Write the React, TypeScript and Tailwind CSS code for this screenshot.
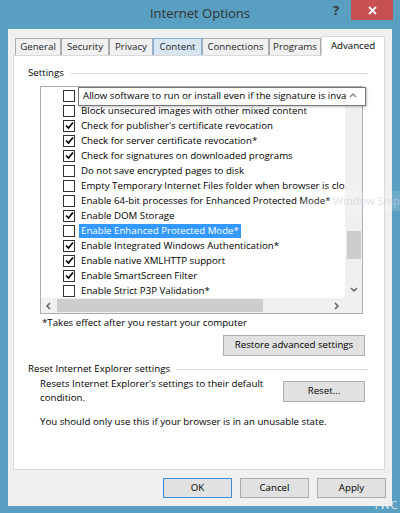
import React from "react";

type Item = { label: string; checked: boolean; selected?: boolean };

const items: Item[] = [
  { label: "Allow software to run or install even if the signature is invalid", checked: false },
  { label: "Block unsecured images with other mixed content", checked: false },
  { label: "Check for publisher's certificate revocation", checked: true },
  { label: "Check for server certificate revocation*", checked: true },
  { label: "Check for signatures on downloaded programs", checked: true },
  { label: "Do not save encrypted pages to disk", checked: false },
  { label: "Empty Temporary Internet Files folder when browser is closed", checked: false },
  { label: "Enable 64-bit processes for Enhanced Protected Mode*", checked: false },
  { label: "Enable DOM Storage", checked: true },
  { label: "Enable Enhanced Protected Mode*", checked: false, selected: true },
  { label: "Enable Integrated Windows Authentication*", checked: true },
  { label: "Enable native XMLHTTP support", checked: true },
  { label: "Enable SmartScreen Filter", checked: true },
  { label: "Enable Strict P3P Validation*", checked: false },
];

const tabs = [
  { name: "General", w: "w-[46px]" },
  { name: "Security", w: "w-[48px]" },
  { name: "Privacy", w: "w-[44px]" },
  { name: "Content", w: "w-[49px]", hover: true },
  { name: "Connections", w: "w-[67px]" },
  { name: "Programs", w: "w-[52px]" },
];

// little chevrons for the scroll bars
const Chevron = ({ dir }: { dir: "up" | "down" | "left" | "right" }) => {
  const d = {
    up: "M1 5 L4 2 L7 5",
    down: "M1 2 L4 5 L7 2",
    left: "M5 1 L2 4 L5 7",
    right: "M2 1 L5 4 L2 7",
  }[dir];
  return (
    <svg width="8" height="8" viewBox="0 0 8 8">
      <path d={d} stroke="#606060" strokeWidth="1.5" fill="none" />
    </svg>
  );
};

const CheckBox = ({ checked }: { checked: boolean }) => (
  <div className="w-[12px] h-[12px] border border-[#333333] bg-white flex items-center justify-center shrink-0">
    {checked && (
      <svg width="9" height="9" viewBox="0 0 9 9">
        <path d="M1 4.5 L3.5 7 L8 1.5" stroke="#000" strokeWidth="1.7" fill="none" />
      </svg>
    )}
  </div>
);

const Button = ({ label, className = "", primary = false }: { label: string; className?: string; primary?: boolean }) => (
  <div
    className={`flex items-center justify-center bg-[#e1e1e1] border ${
      primary ? "border-[#3c8fd6]" : "border-[#adadad]"
    } text-black ${className}`}
  >
    {label}
  </div>
);

export default function App() {
  return (
    <div className="w-[400px] h-[513px] bg-[#589fc1] flex flex-col relative overflow-hidden font-['Open_Sans',sans-serif] text-[9.7px] text-black">
      {/* title bar */}
      <div className="h-[29px] grid grid-cols-[1fr_auto_1fr] shrink-0">
        <div />
        <div className="pt-[4px] text-[13px] text-[#333333] leading-[18px]">Internet Options</div>
        <div className="flex justify-end items-start">
          <div className="mt-[3px] mr-[12px] text-[12px] font-bold text-[#333] leading-[16px]">?</div>
          <div className="w-[42px] h-[20px] mr-[7px] bg-[#c75050] flex items-center justify-center">
            <svg width="9" height="9" viewBox="0 0 9 9">
              <path d="M1 1 L8 8 M8 1 L1 8" stroke="#fff" strokeWidth="1.8" />
            </svg>
          </div>
        </div>
      </div>

      {/* client area */}
      <div className="mx-[8px] h-[477px] bg-[#f0f0f0] flex flex-col shrink-0">
        {/* tabs */}
        <div className="mt-[7px] h-[19px] flex items-end pl-[7px] pr-[7px]">
          {tabs.map((t) => (
            <div
              key={t.name}
              className={`${t.w} h-[17px] flex items-center justify-center border border-b-0 ${
                t.hover ? "bg-[#d8e6f2] border-[#7eb4ea]" : "bg-[#f0f0f0] border-[#acacac]"
              } text-[#1e1e1e]`}
            >
              {t.name}
            </div>
          ))}
          <div className="flex-1 h-[20px] mb-[-1px] relative z-10 bg-white border border-b-0 border-[#d9d9d9] flex items-center justify-center">
            Advanced
          </div>
        </div>

        {/* tab panel */}
        <div className="ml-[5px] mr-[7px] h-[415px] border border-[#d9d9d9] bg-white flex flex-col pl-[14px] pr-[17px]">
          <div className="mt-[10px] h-[14px] flex items-center gap-[6px]">
            <span>Settings</span>
            <div className="flex-1 h-px bg-[#dcdcdc]" />
          </div>

          {/* list box */}
          <div className="ml-[12px] mt-[6px] w-[323px] h-[228px] border border-[#abadb3] flex flex-col relative">
            <div className="flex h-[211px]">
              <div className="flex-1 overflow-hidden whitespace-nowrap flex flex-col pt-[1px]">
                {items.map((it) => (
                  <div key={it.label} className="h-[15px] flex items-center pl-[22px] shrink-0">
                    <CheckBox checked={it.checked} />
                    <span
                      className={`ml-[4px] px-[2px] leading-[14px] ${
                        it.selected ? "bg-[#3399ff] text-white" : ""
                      }`}
                    >
                      {it.label}
                    </span>
                  </div>
                ))}
              </div>
              {/* vertical scroll bar */}
              <div className="w-[17px] bg-[#f0f0f0] flex flex-col items-center">
                <div className="h-[17px] flex items-center justify-center">
                  <Chevron dir="up" />
                </div>
                <div className="flex-1 w-full flex flex-col items-center">
                  <div className="mt-[127px] w-[14px] h-[28px] bg-[#cdcdcd]" />
                </div>
                <div className="h-[17px] flex items-center justify-center">
                  <Chevron dir="down" />
                </div>
              </div>
            </div>
            {/* horizontal scroll bar */}
            <div className="flex h-[15px] bg-[#f0f0f0]">
              <div className="flex-1 flex items-center">
                <div className="w-[16px] flex items-center justify-center">
                  <Chevron dir="left" />
                </div>
                <div className="w-[206px] h-[13px] bg-[#cdcdcd]" />
                <div className="flex-1" />
                <div className="w-[16px] flex items-center justify-center">
                  <Chevron dir="right" />
                </div>
              </div>
              <div className="w-[17px]" />
            </div>

            {/* tooltip over the first row */}
            <div className="absolute left-[37px] top-0 w-[288px] h-[19px] bg-white border border-[#767676] shadow-[1px_1px_2px_rgba(0,0,0,0.25)] flex items-center pl-[4px] pr-[10px] overflow-hidden whitespace-nowrap z-20">
              Allow software to run or install even if the signature is inva
              <div className="absolute right-[8px] top-[4px] opacity-70">
                <Chevron dir="up" />
              </div>
            </div>
          </div>

          <div className="ml-[14px] mt-[2px] h-[14px] flex items-center">*Takes effect after you restart your computer</div>

          <div className="mt-[5px] flex justify-end">
            <Button label="Restore advanced settings" className="w-[142px] h-[21px] mr-[2px]" />
          </div>

          <div className="mt-[6px] h-[14px] flex items-center gap-[6px]">
            <span>Reset Internet Explorer settings</span>
            <div className="flex-1 h-px bg-[#dcdcdc]" />
          </div>

          <div className="ml-[12px] mt-[1px] flex items-start justify-between">
            <div className="w-[230px] leading-[14px]">
              Resets Internet Explorer's settings to their default condition.
            </div>
            <Button label="Reset..." className="w-[82px] h-[21px] mt-[4px] mr-[2px]" />
          </div>

          <div className="ml-[12px] mt-[10px] leading-[14px]">
            You should only use this if your browser is in an unusable state.
          </div>
        </div>

        {/* dialog buttons */}
        <div className="mt-[8px] mr-[6px] flex justify-end gap-[8px]">
          <Button label="OK" primary className="w-[69px] h-[20px]" />
          <Button label="Cancel" className="w-[69px] h-[20px]" />
          <Button label="Apply" className="w-[69px] h-[20px]" />
        </div>
      </div>

      {/* faint "Window Snip" ghost over the list */}
      <div className="absolute left-[302px] top-[191px] h-[20px] pl-[31px] bg-white/20 text-[11px] leading-[20px] text-[#ccd6df] opacity-70 whitespace-nowrap">
        Window Snip
      </div>

      {/* watermark */}
      <div className="absolute right-[2px] bottom-[2px] text-[11px] text-[#e4ebf1] tracking-[0.5px] leading-[12px]">TWC</div>
    </div>
  );
}
